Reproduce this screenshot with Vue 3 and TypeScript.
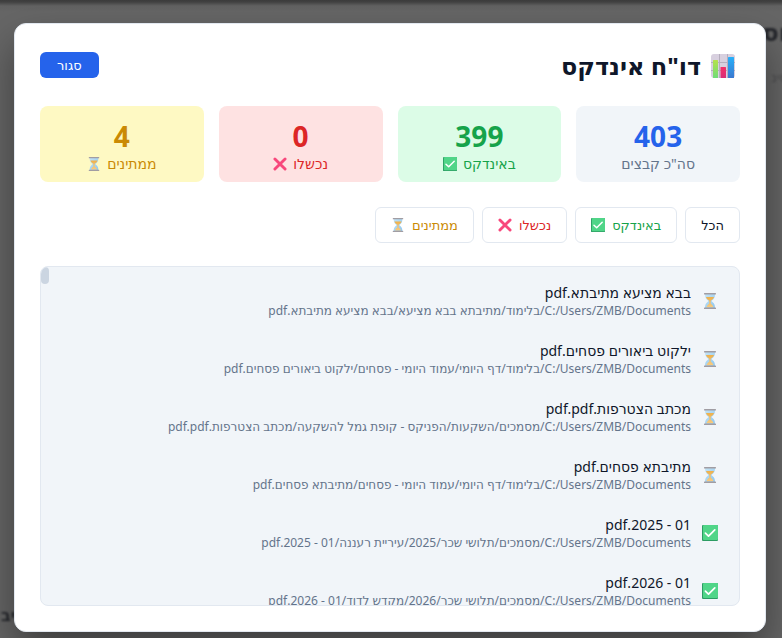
<script setup lang="ts">
import { computed, ref } from 'vue'

type Status = 'done' | 'failed' | 'pending'
type Filter = Status | 'all'

interface IndexedFile {
  name: string
  folder: string
  status: Status
}

const root = 'C:/Users/ZMB/Documents/'
const filter = ref<Filter>('all')
const open = ref(true)

const stats: { key: Filter; value: number; label: string }[] = [
  { key: 'all', value: 403, label: 'סה"כ קבצים' },
  { key: 'done', value: 399, label: 'באינדקס' },
  { key: 'failed', value: 0, label: 'נכשלו' },
  { key: 'pending', value: 4, label: 'ממתינים' },
]

const filters: { key: Filter; label: string }[] = [
  { key: 'all', label: 'הכל' },
  { key: 'done', label: 'באינדקס' },
  { key: 'failed', label: 'נכשלו' },
  { key: 'pending', label: 'ממתינים' },
]

const files: IndexedFile[] = [
  { name: 'בבא מציעא מתיבתא.pdf', folder: 'בלימוד/מתיבתא בבא מציעא/', status: 'pending' },
  { name: 'ילקוט ביאורים פסחים.pdf', folder: 'בלימוד/דף היומי/עמוד היומי - פסחים/', status: 'pending' },
  { name: 'מכתב הצטרפות.pdf.pdf', folder: 'מסמכים/השקעות/הפניקס - קופת גמל להשקעה/', status: 'pending' },
  { name: 'מתיבתא פסחים.pdf', folder: 'בלימוד/דף היומי/עמוד היומי - פסחים/', status: 'pending' },
  { name: '01 - 2025.pdf', folder: 'מסמכים/תלושי שכר/2025/עיריית רעננה/', status: 'done' },
  { name: '01 - 2026.pdf', folder: 'מסמכים/תלושי שכר/2026/מקדש לדוד/', status: 'done' },
]

const visible = computed(() =>
  filter.value === 'all' ? files : files.filter((f) => f.status === filter.value),
)
</script>

<template>
  <div class="page" dir="rtl" lang="he">
    <svg class="sprite" aria-hidden="true">
      <defs>
        <linearGradient id="g-sand" x1="0" y1="0" x2="0" y2="1">
          <stop offset="0" stop-color="#eeb04a" /><stop offset="1" stop-color="#f9cb80" />
        </linearGradient>
        <linearGradient id="g-glass" x1="0" y1="0" x2="1" y2="1">
          <stop offset="0" stop-color="#c5e4f5" /><stop offset="1" stop-color="#8ec6ee" />
        </linearGradient>
        <linearGradient id="g-blue" x1="0" y1="0" x2="0" y2="1">
          <stop offset="0" stop-color="#27b0fa" /><stop offset="1" stop-color="#3b78cf" />
        </linearGradient>
        <linearGradient id="g-green" x1="0" y1="0" x2="0" y2="1">
          <stop offset="0" stop-color="#b5e24b" /><stop offset="1" stop-color="#6fdb78" />
        </linearGradient>
        <linearGradient id="g-pink" x1="0" y1="0" x2="0" y2="1">
          <stop offset="0" stop-color="#f52f68" /><stop offset="1" stop-color="#d62d78" />
        </linearGradient>
      </defs>
      <symbol id="i-done" viewBox="0 0 16 16">
        <rect width="16" height="16" rx="1" fill="#2c9c63" />
        <rect x="1" y="0" width="15" height="15" rx="1" fill="#50d588" />
        <path d="M3.4 8.2 6.5 11.2 12.8 4.8" fill="none" stroke="#fff" stroke-width="1.7" stroke-linecap="round" stroke-linejoin="round" />
      </symbol>
      <symbol id="i-failed" viewBox="0 0 16 16">
        <path d="M2.2 2.2 13.8 13.8M13.8 2.2 2.2 13.8" fill="none" stroke="#f8487c" stroke-width="3.3" stroke-linecap="round" />
      </symbol>
      <symbol id="i-pending" viewBox="0 0 16 16">
        <path d="M3 1H13C13 5 11.8 6 9.400 8 11.8 10 13 11 13 15H3C3 11 4.2 10 6.600 8 4.2 6 3 5 3 1Z" fill="url(#g-glass)" />
        <path d="M4 4H12C11.600 5.600 10.600 6.400 8.700 7.800V10.800C10.400 12 11.200 12.800 11.400 14.200H4.600C4.800 12.800 5.600 12 7.300 10.800V7.800C5.400 6.400 4.400 5.600 4 4Z" fill="url(#g-sand)" />
        <rect x="2" y="0" width="12" height="1.500" rx=".6" fill="#a19da3" />
        <rect x="2" y="14.500" width="12" height="1.500" rx=".6" fill="#a19da3" />
      </symbol>
      <symbol id="i-chart" viewBox="0 0 24 24">
        <rect width="24" height="24" rx="3" fill="#d8d0df" />
        <path d="M0 8.500H24M0 16.500H24M8.500 0V24M16.500 0V24" stroke="#b6aebe" stroke-width="1" />
        <rect x="2" y="6" width="5" height="18" rx=".5" fill="url(#g-green)" />
        <rect x="9.500" y="13" width="5.500" height="11" rx=".5" fill="url(#g-pink)" />
        <rect x="17" y="3" width="6" height="21" rx=".5" fill="url(#g-blue)" />
      </symbol>
    </svg>

    <div class="backdrop" aria-hidden="true">
      <span class="ghost ghost-title">וס</span>
      <span class="ghost ghost-sub">סינ</span>
      <span class="ghost ghost-foot">יב</span>
    </div>

    <div class="overlay">
      <section v-if="open" class="dialog" role="dialog" aria-labelledby="report-title">
        <header class="head">
          <h1 id="report-title" class="title">
            <svg class="title-icon" aria-hidden="true"><use href="#i-chart" /></svg>
            דו"ח אינדקס
          </h1>
          <button type="button" class="close" @click="open = false">סגור</button>
        </header>

        <div class="stats">
          <div v-for="s in stats" :key="s.key" class="stat" :class="s.key">
            <strong class="value">{{ s.value }}</strong>
            <span class="label">
              {{ s.label }}
              <svg v-if="s.key !== 'all'" class="icon" aria-hidden="true"><use :href="`#i-${s.key}`" /></svg>
            </span>
          </div>
        </div>

        <div class="filters">
          <button v-for="f in filters" :key="f.key" type="button" class="filter" :class="f.key" @click="filter = f.key">
            {{ f.label }}
            <svg v-if="f.key !== 'all'" class="icon" aria-hidden="true"><use :href="`#i-${f.key}`" /></svg>
          </button>
        </div>

        <div class="list">
          <span class="thumb" aria-hidden="true"></span>
          <ul class="rows">
            <li v-for="f in visible" :key="f.name" class="row">
              <svg class="row-icon" aria-hidden="true"><use :href="`#i-${f.status}`" /></svg>
              <div class="text">
                <div class="name">{{ f.name }}</div>
                <div class="path">{{ root + f.folder + f.name }}</div>
              </div>
            </li>
          </ul>
        </div>
      </section>
    </div>
  </div>
</template>

<style>
body {
  margin: 0;
}
</style>

<style scoped>
.page {
  position: relative;
  height: 100vh;
  overflow: hidden;
  background: #666;
  color: #0f172a;
  font-family: 'Noto Sans', 'DejaVu Sans', sans-serif;
}
.sprite {
  position: absolute;
  width: 0;
  height: 0;
}
.backdrop {
  position: absolute;
  inset: 0;
  background: linear-gradient(#3c3c3c 0, #424242 2px, #626262 6px, #666 12px);
}
.ghost {
  position: absolute;
  color: #24262b;
  filter: blur(1px);
  white-space: nowrap;
}
.ghost-title {
  right: -5px;
  top: 15px;
  font-size: 24px;
  line-height: 34px;
  font-weight: 700;
}
.ghost-sub {
  right: -6px;
  top: 68px;
  font-size: 13px;
  color: #4c4c4e;
}
.ghost-foot {
  left: 1px;
  bottom: 12px;
  font-size: 16px;
  font-weight: 700;
}
.overlay {
  position: relative;
  box-sizing: border-box;
  display: flex;
  height: 100%;
  padding: 23px 16px 6px 14px;
}
.dialog {
  box-sizing: border-box;
  display: flex;
  flex-direction: column;
  flex: 1;
  min-width: 0;
  padding: 25px;
  background: #fff;
  border: 1px solid #e2e8f0;
  border-radius: 12px;
  box-shadow: 0 20px 40px rgba(0, 0, 0, 0.4);
}
.head {
  display: flex;
  align-items: center;
  justify-content: space-between;
  height: 32px;
  margin-bottom: 25px;
}
.title {
  display: flex;
  align-items: center;
  gap: 10px;
  margin: 0;
  padding: 2px 5px 0 0;
  font-size: 24px;
  line-height: 32px;
  font-weight: 700;
}
.title-icon {
  width: 24px;
  height: 24px;
}
.close {
  height: 26px;
  padding: 0 17px;
  border: 0;
  border-radius: 6px;
  background: #2563eb;
  color: #fff;
  font-family: inherit;
  font-size: 13px;
  line-height: 26px;
}
.stats {
  display: grid;
  grid-template-columns: repeat(4, 1fr);
  gap: 15px;
  margin-bottom: 25px;
}
.stat {
  display: flex;
  flex-direction: column;
  align-items: center;
  box-sizing: border-box;
  height: 76px;
  padding-top: 12px;
  border-radius: 8px;
}
.value {
  font-size: 28px;
  line-height: 36px;
}
.label {
  display: flex;
  align-items: center;
  gap: 6px;
  font-size: 14px;
  line-height: 20px;
}
.icon {
  width: 14px;
  height: 14px;
}
.stat.all {
  background: #f1f5f9;
}
.stat.all .value {
  color: #2563eb;
}
.stat.all .label {
  color: #64748b;
}
.stat.done {
  background: #dcfce7;
}
.stat.failed {
  background: #fee2e2;
}
.stat.pending {
  background: #fef9c3;
}
.done {
  color: #16a34a;
}
.failed {
  color: #dc2626;
}
.pending {
  color: #ca8a04;
}
.filters {
  display: flex;
  gap: 8px;
  margin-bottom: 23px;
}
.filter {
  display: flex;
  align-items: center;
  gap: 7px;
  box-sizing: border-box;
  height: 36px;
  padding: 0 15px;
  border: 1px solid #e2e8f0;
  border-radius: 6px;
  background: #fff;
  font-family: inherit;
  font-size: 13px;
  line-height: 20px;
}
.filter.all {
  color: #0f172a;
}
.list {
  position: relative;
  flex: 1;
  min-height: 0;
  overflow: hidden;
  background: #f1f5f9;
  border: 1px solid #e2e8f0;
  border-radius: 8px;
}
.thumb {
  position: absolute;
  left: 0;
  top: 0;
  width: 8px;
  height: 17px;
  border-radius: 4px;
  background: #cbd5e1;
}
.rows {
  margin: 0;
  padding: 5px 21px;
  list-style: none;
}
.row {
  display: flex;
  align-items: center;
  gap: 11px;
  height: 58px;
}
.row-icon {
  flex: none;
  width: 16px;
  height: 16px;
}
.text {
  min-width: 0;
  padding-top: 2px;
  white-space: nowrap;
}
.name {
  font-size: 14px;
  line-height: 18px;
}
.path {
  font-size: 12px;
  line-height: 18px;
  color: #64748b;
}
</style>
